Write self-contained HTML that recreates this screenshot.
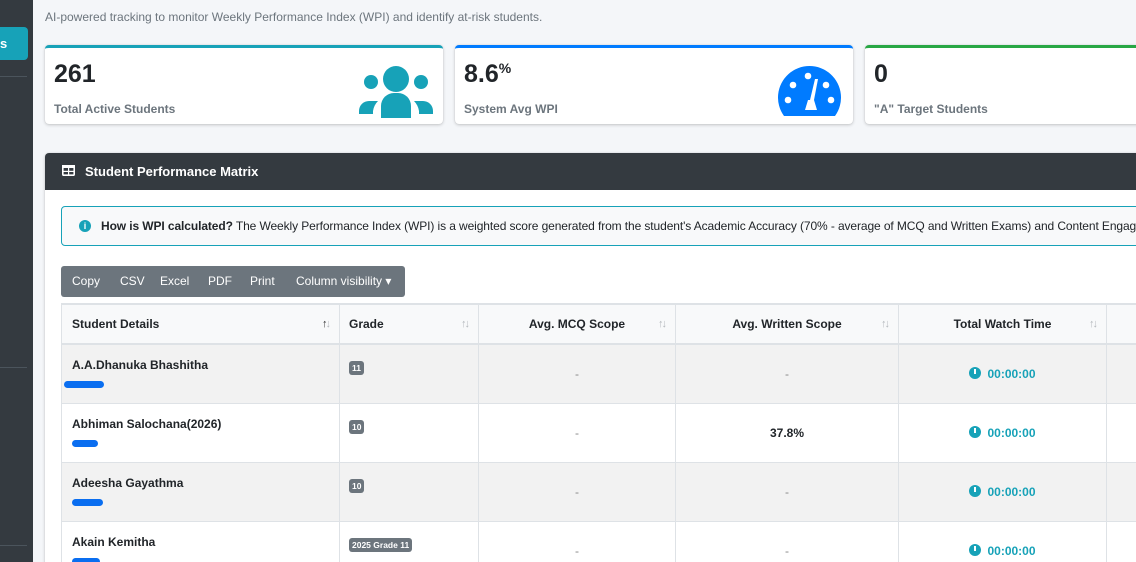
<!DOCTYPE html>
<html><head><meta charset="utf-8"><style>
*{box-sizing:border-box;margin:0;padding:0}
html,body{width:1136px;height:562px;overflow:hidden}
body{background:#f4f6f9;font-family:"Liberation Sans",sans-serif;color:#212529;position:relative}
.a{position:absolute}
.sb{left:0;top:0;width:33px;height:562px;background:#343a40}
.hr{left:0;width:27px;height:1px;background:#4b545c}
.card{background:#fff;border-radius:4px;box-shadow:0 0 1px rgba(0,0,0,.13),0 1px 3px rgba(0,0,0,.2)}
.num{font-weight:bold;font-size:25px;color:#212529}
.lbl{font-weight:bold;font-size:12px;color:#6c757d}
th,td{border:1px solid #dee2e6}
table{border-collapse:collapse;position:absolute;left:61px;top:303px;width:1105px;table-layout:fixed;font-size:12px}
th{height:40px;background:#f8f9fa;border-top:2px solid #dee2e6;border-bottom:2px solid #dee2e6;font-weight:bold;position:relative}
th .s{position:absolute;right:10px;top:13px;color:#b5b9bd;font-size:11px;letter-spacing:-2px}
td{height:59px;text-align:center;vertical-align:middle}
tr.g td{background:#f2f2f2}
td.n{text-align:left;vertical-align:top;padding:13px 10px 0;font-weight:bold}
td.gr{text-align:left;vertical-align:top;padding:15px 9px 0}
.bd{display:inline-block;background:#6c757d;color:#fff;font-size:8.5px;font-weight:bold;padding:2px 3px;border-radius:3px}
.blob{display:block;margin-top:9px;height:7px;background:#0a6ef0;border-radius:4px}
.dash{color:#888}
.tm{color:#17a2b8;font-weight:bold}
.clk{display:inline-block;width:12px;height:12px;border-radius:50%;background:#17a2b8;vertical-align:-1px;margin-right:6px;position:relative}
.clk:after{content:"";position:absolute;left:5px;top:2px;width:2px;height:5px;background:#fff}
</style></head><body>
<div class="a sb"></div>
<div class="a" style="left:0;top:27px;width:28px;height:33px;background:#17a2b8;border-radius:0 4px 4px 0;color:#fff;font-weight:bold;font-size:13px;line-height:33px;padding-left:0">s</div>
<div class="a hr" style="top:76px"></div>
<div class="a hr" style="top:367px"></div>
<div class="a hr" style="top:545px"></div>
<div class="a" style="left:45px;top:10px;font-size:12px;color:#6c757d">AI-powered tracking to monitor Weekly Performance Index (WPI) and identify at-risk students.</div>

<div class="a card" style="left:45px;top:45px;width:398px;height:79px;border-top:3px solid #17a2b8">
 <div class="a num" style="left:9px;top:12px">261</div>
 <div class="a lbl" style="left:9px;top:54px">Total Active Students</div>
 <svg class="a" style="left:314px;top:18px" width="74" height="52" viewBox="0 0 74 52"><g fill="#17a2b8"><circle cx="37" cy="13" r="13"/><circle cx="12" cy="16" r="7"/><circle cx="62" cy="16" r="7"/><path d="M22 52v-12a13 13 0 0 1 13-13h4a13 13 0 0 1 13 13v12z"/><path d="M0 45a10 10 0 0 1 10-10h9a18 18 0 0 0-5 10v3h-14z"/><path d="M74 45a10 10 0 0 0-10-10h-9a18 18 0 0 1 5 10v3h14z"/></g></svg>
</div>
<div class="a card" style="left:455px;top:45px;width:398px;height:79px;border-top:3px solid #007bff">
 <div class="a num" style="left:9px;top:12px">8.6<sup style="font-size:14px;vertical-align:9px">%</sup></div>
 <div class="a lbl" style="left:9px;top:54px">System Avg WPI</div>
 <svg class="a" style="left:323px;top:18px" width="63" height="50" viewBox="0 0 63 50"><path fill="#007bff" d="M6 50A31.5 31.5 0 1 1 57 50Z"/><g fill="#fff"><circle cx="10" cy="34" r="3.3"/><circle cx="53" cy="34" r="3.3"/><circle cx="15" cy="19" r="3.3"/><circle cx="48" cy="19" r="3.3"/><circle cx="30" cy="10" r="3.3"/><path d="M37 13l-5 21h4l4-21z"/><path d="M27 44l3-10h6l3 10z"/></g></svg>
</div>
<div class="a card" style="left:865px;top:45px;width:290px;height:79px;border-top:3px solid #28a745">
 <div class="a num" style="left:9px;top:12px">0</div>
 <div class="a lbl" style="left:9px;top:54px">"A" Target Students</div>
</div>

<div class="a card" style="left:45px;top:153px;width:1110px;height:420px;border-radius:4px 4px 0 0"></div>
<div class="a" style="left:45px;top:153px;width:1110px;height:37px;background:#343a40;border-radius:4px 0 0 0;color:#fff;font-weight:bold;font-size:13px;line-height:37px;padding-left:40px">Student Performance Matrix</div>
<svg class="a" style="left:62px;top:165px" width="13" height="11" viewBox="0 0 13 11"><rect x="0.8" y="0.8" width="11.4" height="9.4" rx="1" fill="none" stroke="#fff" stroke-width="1.6"/><rect x="0" y="0" width="13" height="3" fill="#fff"/><rect x="6" y="3" width="1.2" height="7" fill="#fff"/><rect x="1" y="5.8" width="11" height="1.2" fill="#fff"/></svg>

<div class="a" style="left:61px;top:206px;width:1100px;height:40px;background:#f8f9fa;border:1px solid #17a2b8;border-radius:4px;font-size:12px;line-height:38px;padding-left:39px;white-space:nowrap;color:#212529;letter-spacing:-0.1px"><b>How is WPI calculated?</b> The Weekly Performance Index (WPI) is a weighted score generated from the student's Academic Accuracy (70% - average of MCQ and Written Exams) and Content Engagement</div>
<div class="a" style="left:79px;top:220px;width:12px;height:12px;border-radius:50%;background:#17a2b8;color:#fff;font-size:9px;font-weight:bold;text-align:center;line-height:12px">i</div>

<div class="a" style="left:61px;top:266px;width:344px;height:31px;background:#6c757d;border-radius:3px;color:#fff;font-size:12px;line-height:31px;white-space:nowrap">
 <span class="a" style="left:11px">Copy</span><span class="a" style="left:59px">CSV</span><span class="a" style="left:99px">Excel</span><span class="a" style="left:147px">PDF</span><span class="a" style="left:189px">Print</span><span class="a" style="left:235px">Column visibility ▾</span>
</div>

<table>
<colgroup><col style="width:278px"><col style="width:139px"><col style="width:197px"><col style="width:223px"><col style="width:208px"><col style="width:60px"></colgroup>
<tr><th style="text-align:left;padding-left:10px">Student Details<span class="s" style="color:#333">↑<span style="color:#b5b9bd">↓</span></span></th><th style="text-align:left;padding-left:9px">Grade<span class="s">↑↓</span></th><th>Avg. MCQ Scope<span class="s">↑↓</span></th><th>Avg. Written Scope<span class="s">↑↓</span></th><th>Total Watch Time<span class="s">↑↓</span></th><th></th></tr>
<tr class="g"><td class="n">A.A.Dhanuka Bhashitha<span class="blob" style="width:40px;margin-left:-8px"></span></td><td class="gr"><span class="bd">11</span></td><td class="dash">-</td><td class="dash">-</td><td><span class="clk"></span><span class="tm">00:00:00</span></td><td></td></tr>
<tr><td class="n">Abhiman Salochana(2026)<span class="blob" style="width:26px"></span></td><td class="gr"><span class="bd">10</span></td><td class="dash">-</td><td><b>37.8%</b></td><td><span class="clk"></span><span class="tm">00:00:00</span></td><td></td></tr>
<tr class="g"><td class="n">Adeesha Gayathma<span class="blob" style="width:31px"></span></td><td class="gr"><span class="bd">10</span></td><td class="dash">-</td><td class="dash">-</td><td><span class="clk"></span><span class="tm">00:00:00</span></td><td></td></tr>
<tr><td class="n">Akain Kemitha<span class="blob" style="width:28px"></span></td><td class="gr"><span class="bd">2025 Grade 11</span></td><td class="dash">-</td><td class="dash">-</td><td><span class="clk"></span><span class="tm">00:00:00</span></td><td></td></tr>
</table>
</body></html>
